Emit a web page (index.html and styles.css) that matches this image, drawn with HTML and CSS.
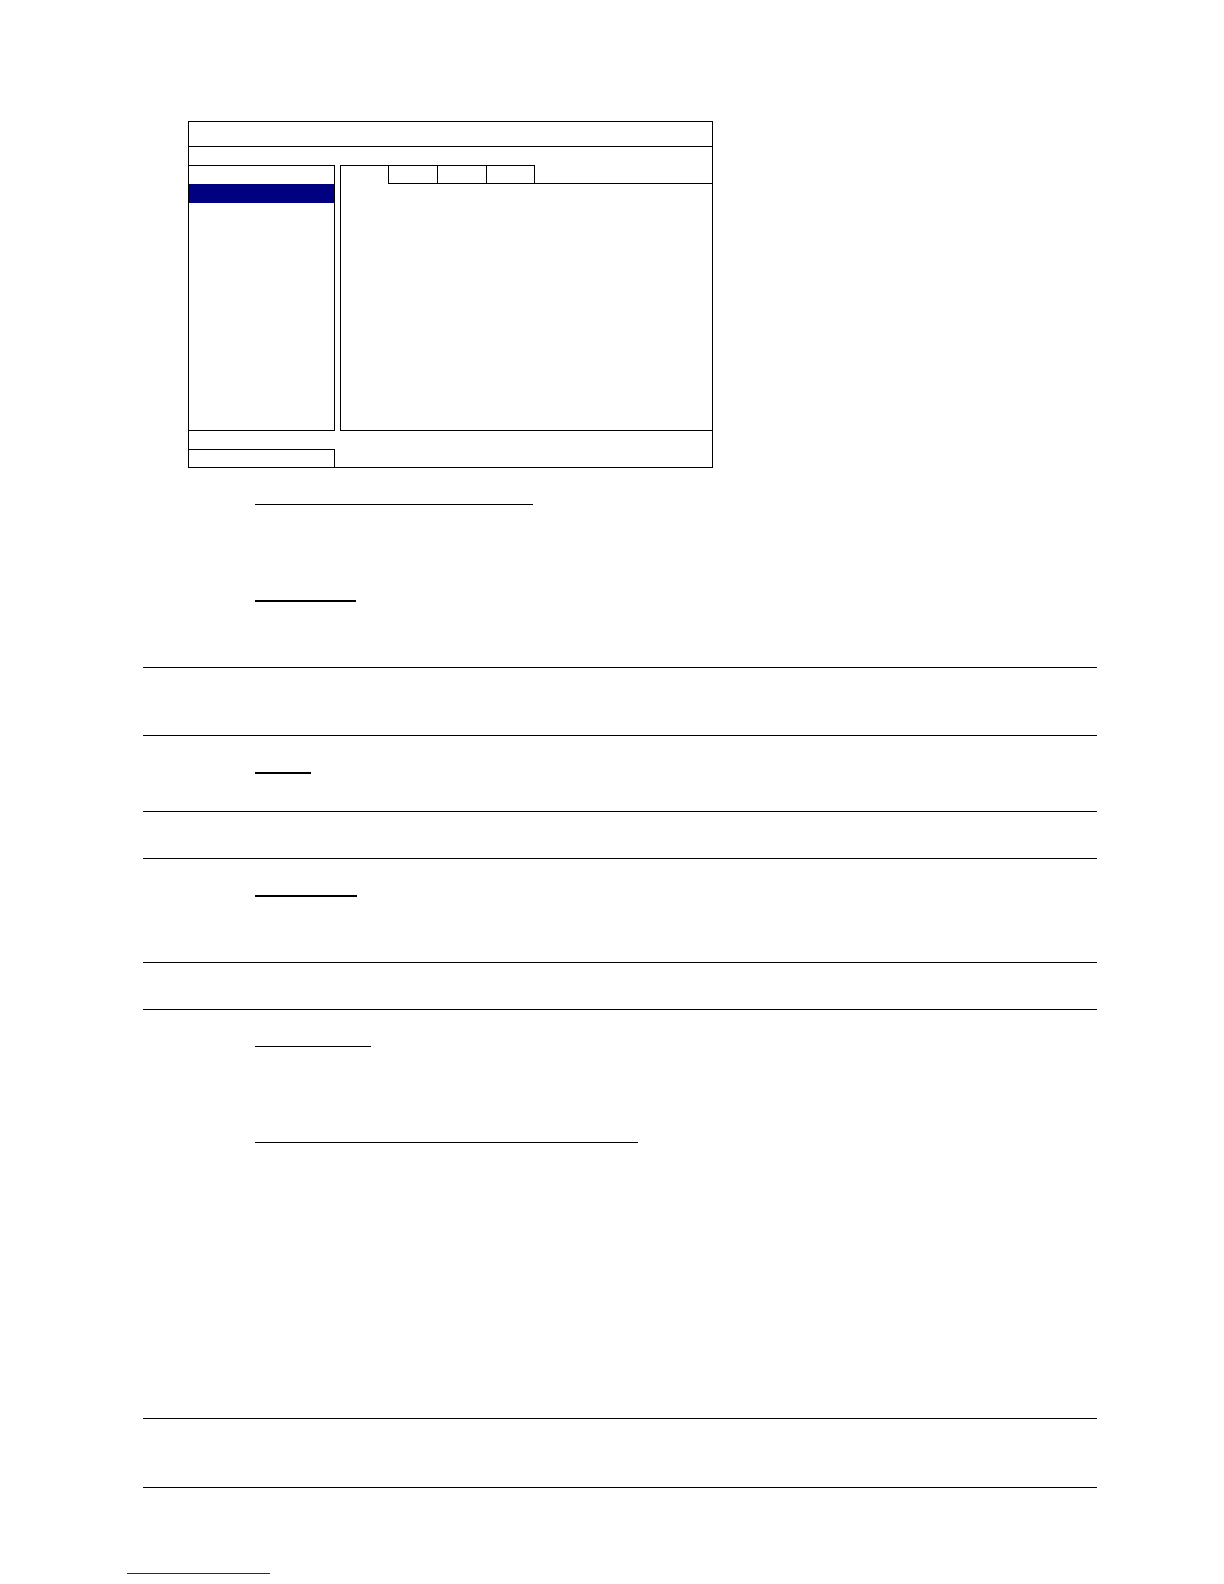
FILE: index.html
```html
<!DOCTYPE html>
<html lang="en">
<head>
<meta charset="utf-8">
<title>Menu screen</title>
<link rel="stylesheet" href="styles.css">
</head>
<body>
<div class="doc">
  <div class="screen">
    <div class="screen-header"></div>
    <div class="screen-gap"></div>
    <div class="screen-row">
      <div class="sidebar">
        <div class="side-item"></div>
        <div class="side-item selected"></div>
      </div>
      <div class="main">
        <div class="tabs">
          <div class="tab-lead"></div>
          <div class="tab first"></div>
          <div class="tab"></div>
          <div class="tab last"></div>
          <div class="tab-rest"></div>
        </div>
        <div class="main-body"></div>
      </div>
    </div>
    <div class="screen-footer">
      <div class="footer-box"></div>
    </div>
  </div>

  <div class="uline thin u1"></div>
  <div class="uline thick u2"></div>
  <div class="rule r1"></div>
  <div class="rule r2"></div>
  <div class="uline thick u3"></div>
  <div class="rule r3"></div>
  <div class="rule r4"></div>
  <div class="uline thick u4"></div>
  <div class="rule r5"></div>
  <div class="rule r6"></div>
  <div class="uline thin u5"></div>
  <div class="uline thin u6"></div>
  <div class="rule r7"></div>
  <div class="rule r8"></div>
</div>
<div class="footnote-line"></div>
</body>
</html>
```

FILE: styles.css
```css
* { box-sizing: border-box; }
html, body {
  margin: 0;
  padding: 0;
  background: #ffffff;
  font-family: "Liberation Serif", "Times New Roman", serif;
}
.doc {
  padding-top: 121px;
  padding-left: 143px;
  width: 1224px;
}

/* screen figure */
.screen {
  margin-left: 45px;
  width: 525px;
  height: 347px;
  border: 1px solid #000;
  display: flex;
  flex-direction: column;
}
.screen-header {
  height: 25px;
  border-bottom: 1px solid #000;
}
.screen-gap { height: 18px; }
.screen-row {
  height: 266px;
  display: flex;
  gap: 5px;
}
.sidebar {
  width: 146px;
  border-top: 1px solid #000;
  border-right: 1px solid #000;
  border-bottom: 1px solid #000;
}
.side-item { height: 18px; }
.side-item.selected {
  height: 19px;
  background: #000080;
}
.main {
  flex: 1;
  display: flex;
  flex-direction: column;
  border-left: 1px solid #000;
  border-bottom: 1px solid #000;
}
.tabs {
  display: flex;
  height: 19px;
}
.tab-lead {
  width: 47px;
  border-top: 1px solid #000;
}
.tab {
  width: 49px;
  border-top: 1px solid #000;
  border-bottom: 1px solid #000;
  border-right: 1px solid #000;
}
.tab.first {
  width: 50px;
  border-left: 1px solid #000;
}
.tab.last { width: 48px; }
.tab-rest {
  flex: 1;
  border-bottom: 1px solid #000;
}
.main-body { flex: 1; }
.screen-footer {
  height: 36px;
  padding-top: 18px;
}
.footer-box {
  width: 146px;
  height: 18px;
  border-top: 1px solid #000;
  border-right: 1px solid #000;
}

/* underlines and rules */
.uline { margin-left: 112px; background: #000; }
.uline.thin { height: 1px; }
.uline.thick { height: 2px; }
.rule { width: 954px; height: 1px; background: #000; }

.u1 { margin-top: 36px; width: 278px; }
.u2 { margin-top: 95px; width: 101px; }
.r1 { margin-top: 65px; }
.r2 { margin-top: 67px; }
.u3 { margin-top: 36px; width: 56px; }
.r3 { margin-top: 37px; }
.r4 { margin-top: 46px; }
.u4 { margin-top: 36px; width: 102px; }
.r5 { margin-top: 65px; }
.r6 { margin-top: 46px; }
.u5 { margin-top: 36px; width: 116px; }
.u6 { margin-top: 95px; width: 383px; }
.r7 { margin-top: 275px; }
.r8 { margin-top: 68px; }

.footnote-line {
  margin-top: 85px;
  margin-left: 127px;
  width: 143px;
  height: 1px;
  background: #1c1ca8;
}
```
